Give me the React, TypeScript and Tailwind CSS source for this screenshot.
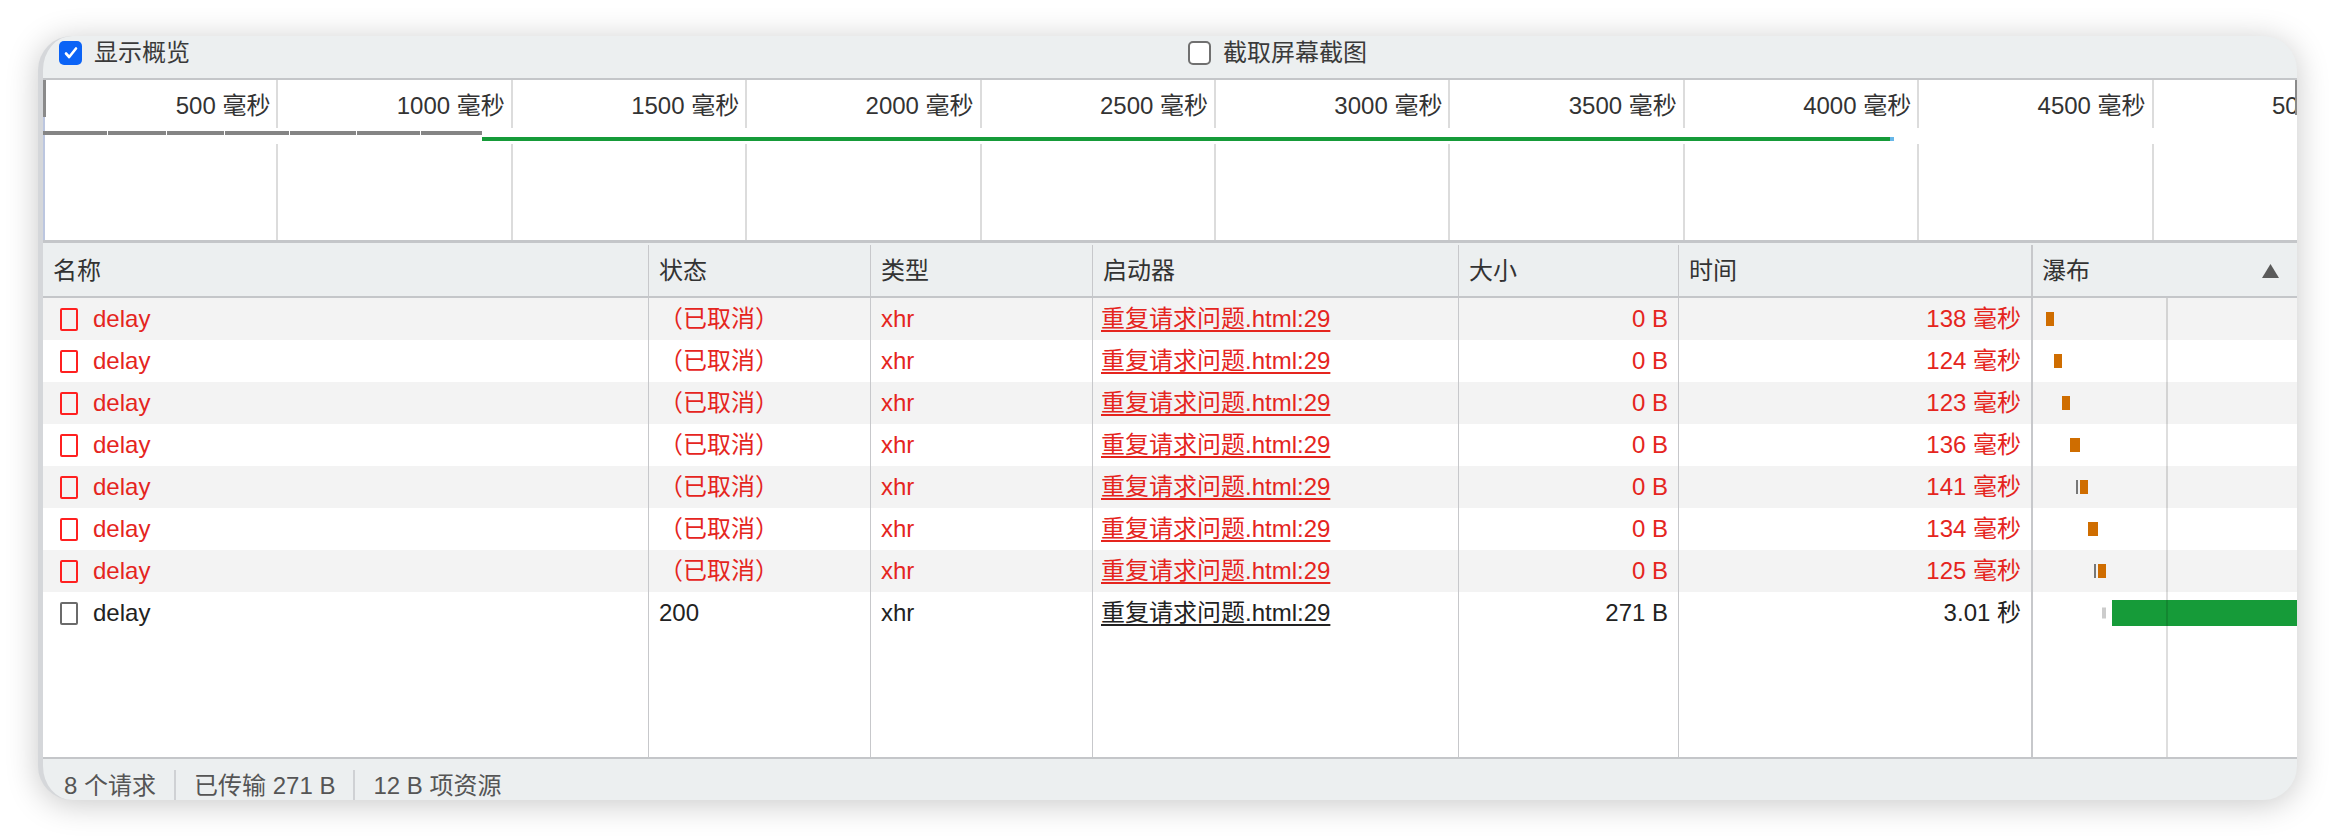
import { type ReactNode } from 'react'

const FONT = 'font-["Liberation_Sans","Noto_Sans_CJK_SC",sans-serif]'
const RED = 'text-[#e5251e]'

const COLS = 'grid grid-cols-[606px_222px_222px_366px_220px_354px_264px]'

type Bar = { left: number; width: number; color: string; height: number }

type Row = {
  failed: boolean
  status: string
  size: string
  time: string
  bars: Bar[]
}

const orange = '#cf6d00'

const rows: Row[] = [
  { failed: true, status: '（已取消）', size: '0 B', time: '138 毫秒', bars: [{ left: 13, width: 8, color: orange, height: 14 }] },
  { failed: true, status: '（已取消）', size: '0 B', time: '124 毫秒', bars: [{ left: 21, width: 8, color: orange, height: 14 }] },
  { failed: true, status: '（已取消）', size: '0 B', time: '123 毫秒', bars: [{ left: 29, width: 8, color: orange, height: 14 }] },
  { failed: true, status: '（已取消）', size: '0 B', time: '136 毫秒', bars: [{ left: 37, width: 10, color: orange, height: 14 }] },
  {
    failed: true,
    status: '（已取消）',
    size: '0 B',
    time: '141 毫秒',
    bars: [
      { left: 43, width: 2, color: '#777777', height: 14 },
      { left: 47, width: 8, color: orange, height: 14 },
    ],
  },
  { failed: true, status: '（已取消）', size: '0 B', time: '134 毫秒', bars: [{ left: 55, width: 10, color: orange, height: 14 }] },
  {
    failed: true,
    status: '（已取消）',
    size: '0 B',
    time: '125 毫秒',
    bars: [
      { left: 61, width: 2, color: '#777777', height: 14 },
      { left: 65, width: 8, color: orange, height: 14 },
    ],
  },
  {
    failed: false,
    status: '200',
    size: '271 B',
    time: '3.01 秒',
    bars: [
      { left: 69, width: 4, color: '#cccccc', height: 11 },
      { left: 79, width: 185, color: '#169b39', height: 26 },
    ],
  },
]

// 500 ms per tick, measured from the reference
const TICK = 234.4
const ticks = Array.from({ length: 10 }, (_, i) => i + 1)

// overview segments for the cancelled requests
const segments = [64, 58, 57, 64, 66, 63, 61]

function Checkbox({ checked }: { checked: boolean }) {
  if (checked) {
    return (
      <span className="flex h-[24px] w-[23px] shrink-0 items-center justify-center rounded-[5px] bg-[#0b63f6]">
        <svg width="16" height="16" viewBox="0 0 16 16" fill="none">
          <path d="M3 8.5l3.2 3.5L13 3.5" stroke="white" strokeWidth="2.6" strokeLinecap="round" strokeLinejoin="round" />
        </svg>
      </span>
    )
  }
  return <span className="h-[24px] w-[23px] shrink-0 rounded-[5px] border-2 border-[#707070] bg-white" />
}

function Cell({ children, className = '' }: { children?: ReactNode; className?: string }) {
  return <div className={`flex items-center border-r border-[#c7c8cb] px-[10px] ${className}`}>{children}</div>
}

function WaterfallCell({ bars }: { bars: Bar[] }) {
  return (
    <div className="relative overflow-hidden">
      {bars.map((b, i) => (
        <div
          key={i}
          className="absolute top-1/2 -translate-y-1/2"
          style={{ left: b.left, width: b.width, height: b.height, background: b.color }}
        />
      ))}
      <div className="absolute top-0 bottom-0 left-[133px] w-[2px] bg-[rgba(0,0,0,0.13)]" />
    </div>
  )
}

function Overview() {
  let x = 0
  return (
    <div className="relative h-[163px] shrink-0 overflow-hidden border-b-[3px] border-[#c4c6c9] bg-white">
      {ticks.map((i) => (
        <div key={i}>
          <div className="absolute top-0 bottom-0 w-[2px] bg-[#dcdcdc]" style={{ left: i * TICK - 1 }} />
          <div
            className="absolute top-[13px] whitespace-nowrap text-right text-[24px] leading-[26px] text-[#333]"
            style={{ right: 2254 - (i * TICK - 7) }}
          >
            {i * 500} 毫秒
          </div>
        </div>
      ))}
      <div className="absolute top-0 left-0 h-[37px] w-[3px] bg-[#8a8a8a]" />
      <div className="absolute top-[37px] bottom-0 left-0 w-[2px] bg-[#bcc6df]" />
      <div className="absolute top-0 right-0 h-[35px] w-[2px] bg-[#8a8a8a]" />
      <div className="absolute top-[48px] right-0 left-[2px] h-[16px] bg-white" />
      {segments.map((w, i) => {
        const left = x
        x += w + 1
        return (
          <div key={i} className="absolute top-[51px] h-[4px] bg-[#858585]" style={{ left, width: w }} />
        )
      })}
      <div className="absolute top-[57px] left-[439px] h-[4px] w-[1408px] bg-[#169b39]" />
      <div className="absolute top-[57px] left-[1847px] h-[4px] w-[4px] bg-[#67b7e8]" />
    </div>
  )
}

export default function App() {
  return (
    <div className={`h-[836px] w-[2334px] overflow-hidden bg-white pt-[36px] pl-[38px] ${FONT}`}>
      <div className="flex h-[764px] w-[2259px] flex-col overflow-hidden rounded-[34px] border-l-[5px] border-[#d5d7da] bg-[#eceff0] shadow-[0_4px_32px_rgba(0,0,0,0.22)]">
        {/* toolbar */}
        <div className="flex h-[44px] shrink-0 items-start border-b-2 border-[#c4c6c9] pt-[4px] pl-[16px] text-[24px] leading-[26px] text-[#3a3a3a]">
          <div className="flex w-[1129px] items-center gap-[12px]">
            <Checkbox checked />
            <span>显示概览</span>
          </div>
          <div className="flex items-center gap-[12px]">
            <Checkbox checked={false} />
            <span>截取屏幕截图</span>
          </div>
        </div>

        <Overview />

        {/* header */}
        <div className={`${COLS} h-[55px] shrink-0 border-b-2 border-[#c4c6c9] pt-[2px] text-[24px] leading-[26px] text-[#333]`}>
          <Cell className="border-[#c4c6c9]">名称</Cell>
          <Cell className="border-[#c4c6c9]">状态</Cell>
          <Cell className="border-[#c4c6c9]">类型</Cell>
          <Cell className="border-[#c4c6c9]">启动器</Cell>
          <Cell className="border-[#c4c6c9]">大小</Cell>
          <Cell className="border-r-2 border-[#c4c6c9]">时间</Cell>
          <div className="flex items-center justify-between pr-[18px] pl-[9px]">
            <span>瀑布</span>
            <svg width="17" height="14" viewBox="0 0 17 14">
              <polygon points="8.5,0 17,14 0,14" fill="#5a5a5a" />
            </svg>
          </div>
        </div>

        {/* body */}
        <div className="flex flex-1 flex-col bg-white text-[24px] leading-[26px]">
          {rows.map((r, i) => {
            const tone = r.failed ? RED : 'text-[#222]'
            return (
              <div key={i} className={`${COLS} h-[42px] shrink-0 ${i % 2 === 0 ? 'bg-[#f3f3f3]' : 'bg-white'} ${tone}`}>
                <Cell className="gap-[15px] pl-[17px]">
                  <span
                    className={`h-[23px] w-[18px] shrink-0 rounded-[2px] border-2 ${
                      r.failed ? 'border-[#ff2020]' : 'border-[#6b6b6b]'
                    }`}
                  />
                  <span>delay</span>
                </Cell>
                <Cell>{r.status}</Cell>
                <Cell>xhr</Cell>
                <Cell className="pl-[8px]">
                  <span className="underline decoration-[2px] underline-offset-[3px]">重复请求问题.html:29</span>
                </Cell>
                <Cell className="justify-end">{r.size}</Cell>
                <Cell className="justify-end border-r-2">{r.time}</Cell>
                <WaterfallCell bars={r.bars} />
              </div>
            )
          })}
          <div className={`${COLS} flex-1`}>
            <Cell />
            <Cell />
            <Cell />
            <Cell />
            <Cell />
            <Cell className="border-r-2" />
            <WaterfallCell bars={[]} />
          </div>
        </div>

        {/* footer */}
        <div className="flex h-[43px] shrink-0 items-stretch border-t-2 border-[#c4c6c9] pl-[21px] text-[24px] leading-[26px] text-[#555]">
          <span className="pt-[14px]">8 个请求</span>
          <span className="mx-[18px] mt-[11px] w-[2px] bg-[#cfd1d4]" />
          <span className="pt-[14px]">已传输 271 B</span>
          <span className="mx-[18px] mt-[11px] w-[2px] bg-[#cfd1d4]" />
          <span className="pt-[14px]">12 B 项资源</span>
        </div>
      </div>
    </div>
  )
}
